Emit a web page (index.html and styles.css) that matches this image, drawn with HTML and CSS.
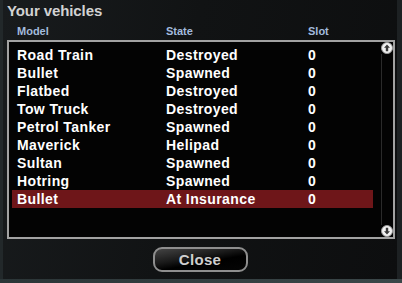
FILE: index.html
```html
<!DOCTYPE html>
<html lang="en">
<head>
    <meta charset="UTF-8">
    <title>Your vehicles</title>
    <link rel="stylesheet" href="styles.css">
</head>
<body>
<div class="window">
    <div class="window__title">Your vehicles</div>
    <div class="cols cols--head">
        <span>Model</span>
        <span>State</span>
        <span>Slot</span>
    </div>
    <div class="list">
        <div class="list__rows">
            <div class="cols row"><span>Road Train</span><span>Destroyed</span><span>0</span></div>
            <div class="cols row"><span>Bullet</span><span>Spawned</span><span>0</span></div>
            <div class="cols row"><span>Flatbed</span><span>Destroyed</span><span>0</span></div>
            <div class="cols row"><span>Tow Truck</span><span>Destroyed</span><span>0</span></div>
            <div class="cols row"><span>Petrol Tanker</span><span>Spawned</span><span>0</span></div>
            <div class="cols row"><span>Maverick</span><span>Helipad</span><span>0</span></div>
            <div class="cols row"><span>Sultan</span><span>Spawned</span><span>0</span></div>
            <div class="cols row"><span>Hotring</span><span>Spawned</span><span>0</span></div>
            <div class="cols row row--selected"><span>Bullet</span><span>At Insurance</span><span>0</span></div>
        </div>
        <div class="scroll">
            <svg class="scroll__btn" viewBox="0 0 12 12" width="12" height="12">
                <circle cx="6" cy="6" r="5.5" fill="#f2f2f2" stroke="#9a9a9a"/>
                <path d="M6 2.5 L9 5.8 H7.2 V9.2 H4.8 V5.8 H3 Z" fill="#3a3a3a"/>
            </svg>
            <div class="scroll__track"></div>
            <svg class="scroll__btn" viewBox="0 0 12 12" width="12" height="12">
                <circle cx="6" cy="6" r="5.5" fill="#f2f2f2" stroke="#9a9a9a"/>
                <path d="M6 9.5 L9 6.2 H7.2 V2.8 H4.8 V6.2 H3 Z" fill="#3a3a3a"/>
            </svg>
        </div>
    </div>
    <div class="footer">
        <button class="btn-close">Close</button>
    </div>
</div>
</body>
</html>
```

FILE: styles.css
```css
* {
    margin: 0;
    box-sizing: border-box;
}

body {
    width: 402px;
    height: 283px;
    overflow: hidden;
    background: linear-gradient(90deg, #2b3537, #3b4749);
    font-family: "Liberation Sans", Arial, sans-serif;
    font-weight: bold;
}

/*window*/

.window {
    height: 279px;
    padding: 2px 0 0;
    border-left: 3px solid #22282a;
    border-right: 5px solid #1d2123;
    background: linear-gradient(100deg, #181b1d 0%, #111314 45%, #0d0e0f 100%);
}

.window__title {
    padding-left: 4px;
    font-size: 15px;
    line-height: 18px;
    letter-spacing: -0.1px;
    color: #d2d2d2;
}

.cols {
    display: grid;
    grid-template-columns: 149px 142px 1fr;
    padding-left: 5px;
}

.cols--head {
    margin: 4px 0 2px 9px;
    font-size: 11px;
    line-height: 14px;
    color: #a3bbdd;
}

/*list*/

.list {
    display: flex;
    height: 199px;
    margin-left: 4px;
    margin-right: 2px;
    border: 2px solid #a2a2a2;
    background: #030303;
}

.list__rows {
    flex: 1;
    padding-top: 4px;
    margin: 0 8px 0 3px;
}

.row {
    height: 18px;
    font-size: 14px;
    line-height: 18px;
    letter-spacing: 0.4px;
    color: #fff;
}

.row--selected {
    background: #6e1619;
}

.scroll {
    display: flex;
    flex-direction: column;
    align-items: center;
    width: 12px;
}

.scroll__btn {
    display: block;
    flex: none;
}

.scroll__track {
    flex: 1;
    width: 12px;
    border-left: 1px solid #2a2a2a;
}

/*footer*/

.footer {
    display: flex;
    justify-content: center;
    padding-top: 8px;
}

.btn-close {
    width: 95px;
    height: 25px;
    border: 2px solid #8e8e8e;
    border-radius: 9px;
    background: linear-gradient(170deg, #444 0%, #1a1a1a 40%, #000 60%, #050505 100%);
    font-family: "Liberation Sans", Arial, sans-serif;
    font-weight: bold;
    font-size: 15px;
    letter-spacing: 0.3px;
    color: #cfcfcf;
    padding: 0;
}
```
